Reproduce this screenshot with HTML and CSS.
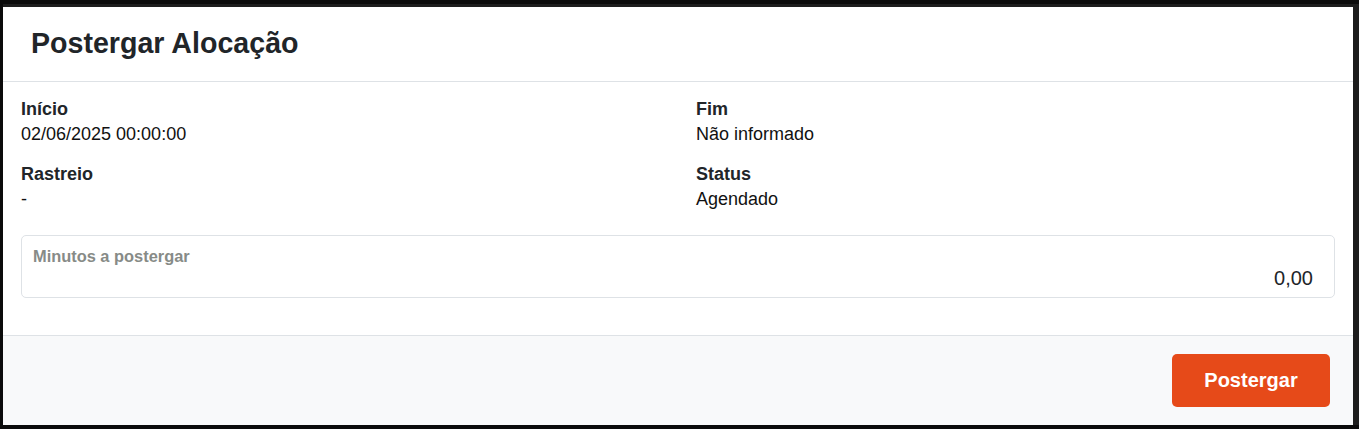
FILE: index.html
```html
<!DOCTYPE html>
<html lang="pt-BR">
<head>
<meta charset="utf-8">
<title>Postergar Alocação</title>
<link rel="stylesheet" href="styles.css">
</head>
<body>
<div class="modal">
  <div class="modal-header">
    <h1 class="modal-title">Postergar Alocação</h1>
  </div>
  <div class="modal-body">
    <div class="info-grid">
      <div class="info-item">
        <div class="info-label">Início</div>
        <div class="info-value">02/06/2025 00:00:00</div>
      </div>
      <div class="info-item">
        <div class="info-label">Fim</div>
        <div class="info-value">Não informado</div>
      </div>
      <div class="info-item">
        <div class="info-label">Rastreio</div>
        <div class="info-value">-</div>
      </div>
      <div class="info-item">
        <div class="info-label">Status</div>
        <div class="info-value">Agendado</div>
      </div>
    </div>
    <div class="field">
      <label class="field-label">Minutos a postergar</label>
      <div class="field-value">0,00</div>
    </div>
  </div>
  <div class="modal-footer">
    <button class="btn-primary" type="button">Postergar</button>
  </div>
</div>
</body>
</html>
```

FILE: styles.css
```css
* { box-sizing: border-box; }
html, body { margin: 0; }
body {
  background: #1d1d1d;
  border-top: 4px solid #0b0b0b;
  border-bottom: 4px solid #0b0b0b;
  border-left: 3px solid #0b0b0b;
  padding: 3px 6px 0 0;
  height: 429px;
  font-family: "Liberation Sans", Arial, sans-serif;
  color: #212529;
}
.modal {
  background: #fff;
  width: 1350px;
  height: 418px;
  display: flex;
  flex-direction: column;
}
.modal-header {
  padding: 19px 28px 21px;
  border-bottom: 1px solid #dee2e6;
}
.modal-title {
  margin: 0;
  font-size: 28.6px;
  line-height: 34px;
  font-weight: 700;
  color: #212529;
}
.modal-body {
  padding: 15px 18px 37px;
}
.info-grid {
  display: grid;
  grid-template-columns: 1fr 1fr;
  column-gap: 36px;
  row-gap: 15px;
}
.info-label {
  font-weight: 700;
  font-size: 18px;
  line-height: 25px;
}
.info-value {
  font-size: 18px;
  line-height: 25px;
  color: #111;
}
.field {
  margin-top: 23px;
  height: 63px;
  border: 1px solid #dee2e6;
  border-radius: 5px;
  padding: 10px 21px 0 11px;
  display: flex;
  flex-direction: column;
}
.field-label {
  font-size: 16.4px;
  line-height: 20px;
  font-weight: 700;
  color: #878b87;
}
.field-value {
  text-align: right;
  font-size: 20px;
  line-height: 24px;
  color: #212529;
}
.modal-footer {
  flex: 1;
  background: #f8f9fa;
  border-top: 1px solid #dee2e6;
  display: flex;
  justify-content: flex-end;
  align-items: flex-start;
  padding: 18px 23px 0 0;
}
.btn-primary {
  width: 158px;
  height: 53px;
  border: none;
  border-radius: 5px;
  background: #e64a19;
  color: #fff;
  font-family: "Liberation Sans", Arial, sans-serif;
  font-weight: 700;
  font-size: 20px;
}
```
